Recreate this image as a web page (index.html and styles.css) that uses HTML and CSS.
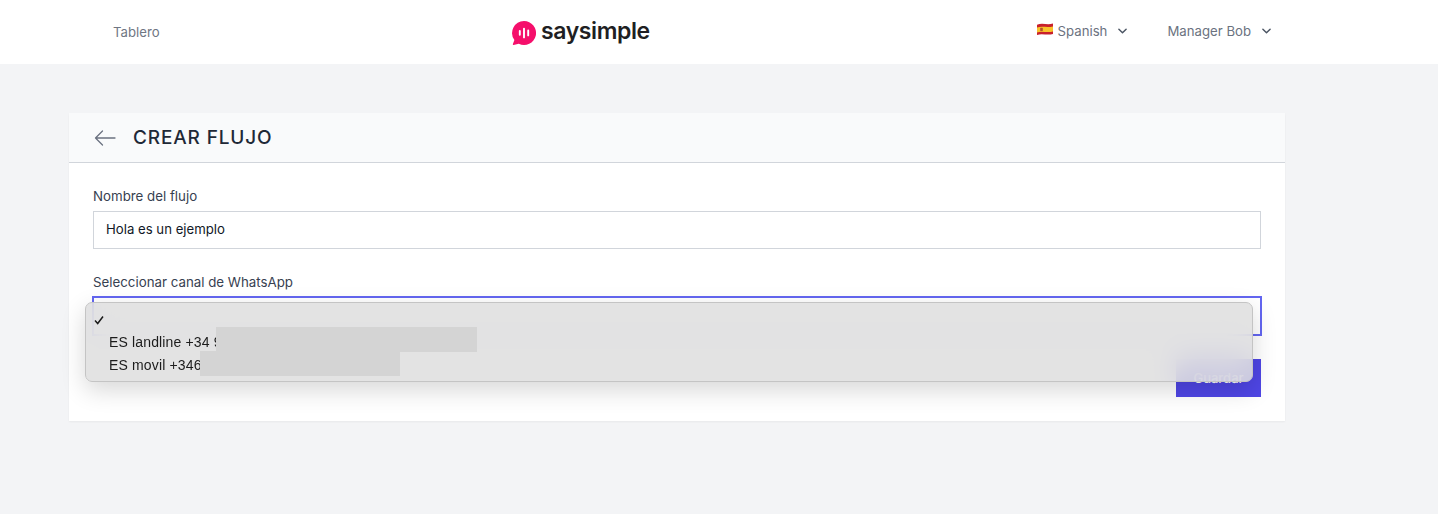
FILE: index.html
```html
<!DOCTYPE html>
<html lang="es">
<head>
<meta charset="utf-8">
<title>Crear flujo</title>
<link rel="stylesheet" href="styles.css">
</head>
<body>
<header class="nav">
  <a class="nav-link">Tablero</a>
  <div class="logo">
    <svg class="logo-mark" viewBox="0 0 24 24" width="24" height="24">
      <path fill="#f50f6b" d="M12 0a12 12 0 1 1-5.2 22.8L1.6 23.9c-.6.1-.9-.3-.7-.8l1.500-4.100A12 12 0 0 1 12 0z"/>
      <path stroke="#fff" stroke-width="1.900" stroke-linecap="round" fill="none" d="M7.800 10v3.800M12 7.600v8.800M16.200 9.400v5"/>
    </svg>
    <span class="logo-text">saysimple</span>
  </div>
  <div class="nav-right">
    <div class="nav-item">
      <svg class="flag" viewBox="0 0 16 12" width="16" height="12">
        <path d="M0 1.800C5 -.4 10 2.200 16 .6v10.400C10 12.600 5 10 0 12z" fill="#c8202c"/>
        <path d="M0 4.600C5 2.800 10 5 16 3.400v5.200C10 10 5 7.800 0 9.400z" fill="#f8c22a"/>
        <rect x="3.200" y="4.700" width="2.600" height="3.400" rx=".6" fill="#b5532a"/>
      </svg>
      <span>Spanish</span>
      <svg class="chev" viewBox="0 0 10 6" width="9" height="6"><path d="M1 1l4 4 4-4" fill="none" stroke="#4b5563" stroke-width="1.600" stroke-linecap="round" stroke-linejoin="round"/></svg>
    </div>
    <div class="nav-item">
      <span>Manager Bob</span>
      <svg class="chev" viewBox="0 0 10 6" width="9" height="6"><path d="M1 1l4 4 4-4" fill="none" stroke="#4b5563" stroke-width="1.600" stroke-linecap="round" stroke-linejoin="round"/></svg>
    </div>
  </div>
</header>

<main class="page">
  <section class="card">
    <div class="card-head">
      <svg class="back" viewBox="0 0 22 16" width="22" height="16"><path d="M21 8H1.500M8.500 1L1.500 8l7 7" fill="none" stroke="#6b7280" stroke-width="1.300" stroke-linecap="round" stroke-linejoin="round"/></svg>
      <h1>CREAR FLUJO</h1>
    </div>
    <form class="card-body">
      <div class="field">
        <label>Nombre del flujo</label>
        <div class="input">Hola es un ejemplo</div>
      </div>
      <div class="field">
        <label>Seleccionar canal de WhatsApp</label>
        <div class="input select"></div>
      </div>
      <div class="actions"><button type="button" class="save">Guardar</button></div>
    </form>
  </section>
</main>

<div class="menu">
  <div class="opt"><svg class="check" viewBox="0 0 10 10" width="10" height="10"><path d="M1 5.500l2.700 3L9 1.500" fill="none" stroke="#1c1c1c" stroke-width="1.500"/></svg></div>
  <div class="opt">ES landline +34 9</div>
  <div class="opt">ES movil +346</div>
  <div class="redact r1"></div>
  <div class="redact r2"></div>
</div>
</body>
</html>
```

FILE: styles.css
```css
* { box-sizing: border-box; }
html, body { margin: 0; height: 100%; }
body {
  background: #f3f4f6;
  font-family: Inter, "Noto Sans", sans-serif;
  color: #111827;
  overflow: hidden;
}
.nav {
  height: 64px;
  background: #fff;
  display: flex;
  align-items: center;
  padding: 0 167px 0 113px;
  font-size: 13.2px;
  color: #6b7280;
}
.nav-link { width: 399px; color: #6f7683; }
.logo { display: flex; align-items: center; gap: 5px; margin-top: 1px; }
.logo-mark { display: block; }
.logo-text {
  font-size: 23px;
  font-weight: 600;
  letter-spacing: -0.4px;
  color: #1f1f23;
  line-height: 1;
  position: relative;
  top: -1px;
}
.nav-right { margin-left: auto; display: flex; gap: 40px; }
.nav-item { display: flex; align-items: center; position: relative; top: -1px; }
.flag { margin-right: 5px; position: relative; top: -2px; }
.chev { margin-left: 11px; }
.page { padding: 49px 153px 0 69px; }
.card {
  background: #fff;
  height: 308px;
  box-shadow: 0 1px 2px rgba(0,0,0,.05);
}
.card-head {
  height: 50px;
  background: #f9fafb;
  border-bottom: 1px solid #d1d5db;
  display: flex;
  align-items: center;
  padding: 0 0 0 25px;
  gap: 17px;
}
.card-head h1 {
  margin: 0;
  font-size: 19px;
  font-weight: 500;
  letter-spacing: .85px;
  color: #1f2937;
}
.back { display: block; }
.card-body { padding: 23px 24px 24px; display: flex; flex-direction: column; }
.field { margin-bottom: 23px; }
.field label {
  display: block;
  font-size: 13.3px;
  line-height: 20px;
  color: #374151;
  margin-bottom: 5px;
}
.input {
  height: 38px;
  border: 1px solid #d1d5db;
  background: #fff;
  padding: 0 12px;
  font-size: 13.2px;
  line-height: 35px;
  color: #111827;
}
.select { border: 2px solid #6366f1; height: 40px; margin: -1px -1px 0; }
.actions { display: flex; justify-content: flex-end; }
.save {
  width: 85px;
  height: 38px;
  border: 0;
  background: #4f46e5;
  color: #fff;
  font: 500 13px Inter, sans-serif;
}
.menu {
  position: absolute;
  left: 85px;
  top: 302px;
  width: 1168px;
  height: 80px;
  padding: 5px 0;
  border-radius: 7px;
  background: rgba(222,222,222,.86);
  -webkit-backdrop-filter: blur(14px);
  backdrop-filter: blur(14px);
  border: 1px solid #c4c4c4;
  box-shadow: 0 8px 24px rgba(0,0,0,.16);
  font-family: "Liberation Sans", Arial, sans-serif;
  font-size: 14px;
  letter-spacing: .15px;
  color: #1c1c1c;
  overflow: hidden;
}
.opt { height: 23px; line-height: 23px; padding-left: 23px; position: relative; }
.check { position: absolute; left: 8px; top: 7px; }
.redact { position: absolute; background: #d4d4d4; }
.r1 { left: 130px; top: 24px; width: 261px; height: 25px; }
.r2 { left: 114px; top: 48px; width: 200px; height: 25px; }
```
